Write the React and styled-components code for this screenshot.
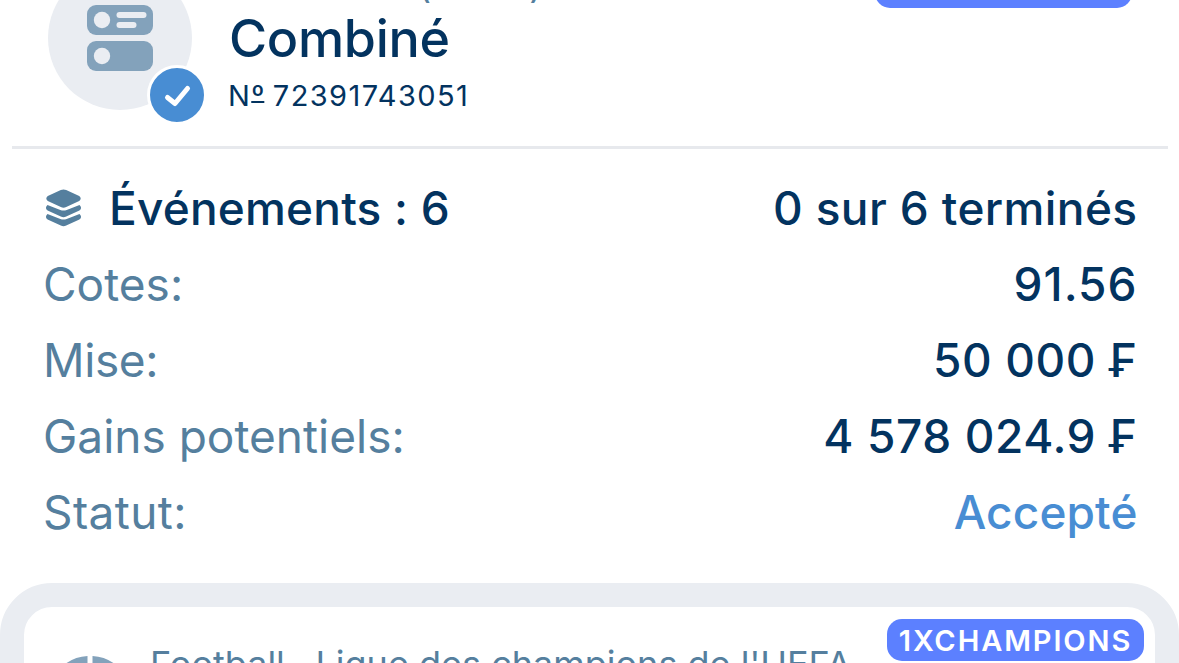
import React from 'react';
import styled, { createGlobalStyle } from 'styled-components';

const rows = [
  { label: 'Cotes:', value: '91.56', track: 1, labelTrack: 0 },
  { label: 'Mise:', value: '50 000 ₣', track: 0.6, labelTrack: -0.4 },
  { label: 'Gains potentiels:', value: '4 578 024.9 ₣', track: 0.6, labelTrack: 0 },
  { label: 'Statut:', value: 'Accepté', track: 0.1, labelTrack: 0.4, accent: true },
];

const App = () => {
  return (
    <Screen>
      <GlobalStyle />
      <Header>
        <Avatar>
          <svg width="66" height="66" viewBox="0 0 66 66">
            <rect width="66" height="30" rx="9" fill="#83a2bb" />
            <rect y="36" width="66" height="30" rx="9" fill="#83a2bb" />
            <circle cx="15" cy="15" r="8.2" fill="#eaedf2" />
            <circle cx="15" cy="51" r="8.2" fill="#eaedf2" />
            <rect x="29.5" y="7" width="30" height="6" rx="3" fill="#eaedf2" />
            <rect x="29.5" y="17" width="20" height="6" rx="3" fill="#eaedf2" />
          </svg>
          <Check>
            <svg width="54" height="54" viewBox="0 0 54 54">
              <path d="M17.5 29.5L25 35.5L37.5 20.5" fill="none" stroke="#fff" strokeWidth="5" strokeLinecap="round" strokeLinejoin="round" />
            </svg>
          </Check>
        </Avatar>
        <Heading>
          <Date>17.09.2024 (20:45)</Date>
          <Title>Combiné</Title>
          <Number>N<Ordinal>º</Ordinal> 72391743051</Number>
        </Heading>
        <Badge>1XCHAMPIONS</Badge>
      </Header>
      <Details>
        <Row>
          <Events>
            <svg width="35" height="38" viewBox="0 0 35 38">
              <path d="M14.8 1.1Q17.5 -.1 20.2 1.1L33.2 7.1Q36.2 9.6 33.2 12.1L20.2 18.1Q17.5 19.4 14.8 18.1L1.8 12.1Q-1.2 9.6 1.8 7.1Z" />
              <path d="M1.5 15.9L14.3 20.9Q17.5 22.1 20.7 20.9L33.5 15.9Q36.6 19 33.4 21.5L20.2 27.5Q17.5 28.8 14.8 27.5L1.6 21.5Q-1.6 19 1.5 15.9Z" />
              <path d="M1.5 24.9L14.3 29.9Q17.5 31.1 20.7 29.9L33.5 24.9Q36.6 28 33.4 30.5L20.2 36.5Q17.5 37.8 14.8 36.5L1.6 30.5Q-1.6 28 1.5 24.9Z" />
            </svg>
            Événements : 6
          </Events>
          <Value $track={0.4}>0 sur 6 terminés</Value>
        </Row>
        {rows.map((row) => (
          <Row key={row.label}>
            <Label $track={row.labelTrack}>{row.label}</Label>
            <Value $track={row.track} $accent={row.accent}>{row.value}</Value>
          </Row>
        ))}
      </Details>
      <EventCard>
        <svg width="84" height="84" viewBox="0 0 84 84">
          <path d="M39.5 0V8L24 18L10.7 14A42 42 0 0 1 39.5 0ZM44.5 0V8L60 18L73.3 14A42 42 0 0 0 44.5 0Z" fill="#83a2bb" />
        </svg>
        <League>Football . Ligue des champions de l'UEFA.</League>
        <Badge>1XCHAMPIONS</Badge>
      </EventCard>
    </Screen>
  );
}

const GlobalStyle = createGlobalStyle`
  body {
    margin: 0;
    background: #fff;
    overflow: hidden;
  }

  * {
    box-sizing: border-box;
  }
`;

const Screen = styled.main`
  height: 663px;
  overflow: hidden;
  font-family: Inter, sans-serif;
  font-feature-settings: 'calt' 0;
  color: #03335f;
  background: #fff;
`;

const Header = styled.header`
  display: flex;
  align-items: flex-start;
  height: 183px;
  margin: -34px 11px 0 12px;
  padding-left: 36px;
  padding-right: 36px;
  border-bottom: 3px solid #e7e9ed;
`;

const Avatar = styled.div`
  position: relative;
  display: flex;
  align-items: center;
  justify-content: center;
  width: 144px;
  height: 144px;
  border-radius: 50%;
  background: #eaedf2;
`;

const Check = styled.span`
  position: absolute;
  right: -15px;
  bottom: -15px;
  display: flex;
  border: 3px solid #fff;
  border-radius: 50%;
  background: #488dd3;
`;

const Heading = styled.div`
  flex: 1;
  padding-left: 36px;
`;

const Date = styled.div`
  height: 37px;
  font-size: 36px;
  line-height: 38px;
  letter-spacing: -0.35px;
  white-space: nowrap;
  color: #557f9e;
`;

const Title = styled.h1`
  margin: 0;
  padding-left: 1px;
  font-size: 52px;
  font-weight: 500;
  line-height: 71px;
  letter-spacing: -0.3px;
`;

const Number = styled.div`
  font-size: 29px;
  line-height: 44px;
  letter-spacing: 1.4px;
  word-spacing: -3px;
`;

const Ordinal = styled.span`
  display: inline-block;
  height: 24px;
  margin-right: 2px;
  line-height: 24px;
  letter-spacing: 0;
  text-decoration: underline 2px;
  text-underline-offset: -5px;
`;

const Badge = styled.span`
  display: flex;
  align-items: center;
  justify-content: center;
  width: 257px;
  height: 42px;
  border-radius: 15px;
  font-size: 29px;
  font-weight: 600;
  letter-spacing: 1.9px;
  color: #fff;
  background: #5c80ff;
`;

const Details = styled.section`
  padding: 21px 42px 33px 43px;
`;

const Row = styled.div`
  display: flex;
  align-items: center;
  justify-content: space-between;
  height: 76px;
  font-size: 46px;
  line-height: 76px;
`;

const Events = styled.div`
  display: flex;
  align-items: center;
  gap: 28px;
  padding-left: 3px;
  font-weight: 500;
  letter-spacing: 0.2px;

  svg {
    fill: #557f9e;
  }
`;

const Label = styled.span`
  letter-spacing: ${({ $track }) => $track || 0}px;
  color: #557f9e;
`;

const Value = styled.span`
  margin-right: -0.5px;
  font-weight: 500;
  letter-spacing: ${({ $track }) => $track || 0}px;
  color: ${({ $accent }) => ($accent ? '#488dd3' : 'inherit')};
`;

const EventCard = styled.section`
  display: flex;
  align-items: flex-start;
  height: 240px;
  padding: 12px 11px 0 24px;
  border: 24px solid #eaedf2;
  border-radius: 52px;

  > svg {
    margin-top: 37px;
  }
`;

const League = styled.div`
  flex: 1;
  margin-top: 27px;
  padding-left: 18px;
  font-size: 36px;
  line-height: 36px;
  white-space: nowrap;
  color: #557f9e;
`;

export default App;
